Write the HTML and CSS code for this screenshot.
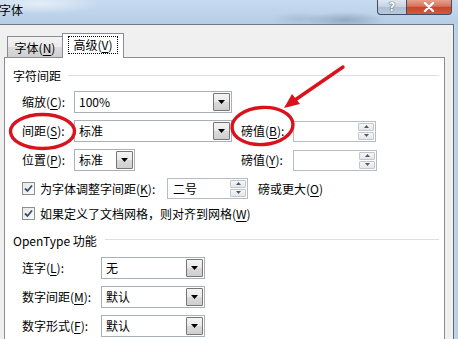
FILE: index.html
```html
<!DOCTYPE html>
<html lang="zh-CN">
<head>
<meta charset="utf-8">
<title>字体</title>
<link rel="stylesheet" href="styles.css">
</head>
<body>
<div class="titlebar">
  <span class="title">字体</span>
  <div class="caption-btns">
    <div class="cbtn help">?</div>
    <div class="cbtn close">
      <svg width="12" height="10" viewBox="0 0 12 10"><path d="M2 1 L10 9 M10 1 L2 9" stroke="#fff" stroke-width="2.4" stroke-linecap="round"/></svg>
    </div>
  </div>
</div>
<div class="window">
  <div class="client">
    <div class="tabs">
      <div class="tab">字体(<u>N</u>)</div>
      <div class="tab active"><span class="focus">高级(<u>V</u>)</span></div>
    </div>
    <div class="panel">
      <div class="group-head"><span>字符间距</span><i class="rule"></i></div>
      <div class="grid1">
        <label class="lbl start">缩放(<u>C</u>):</label>
        <div class="combo w158"><span class="val">100%</span><span class="drop"><svg width="7" height="4" viewBox="0 0 7 4"><polygon points="0,0 7,0 3.5,4" fill="#000"/></svg></span></div>

        <label class="lbl start">间距(<u>S</u>):</label>
        <div class="combo w158"><span class="val">标准</span><span class="drop"><svg width="7" height="4" viewBox="0 0 7 4"><polygon points="0,0 7,0 3.5,4" fill="#000"/></svg></span></div>
        <label class="lbl">磅值(<u>B</u>):</label>
        <div class="spin w83"><span class="val"></span><span class="spinbtns"><span class="sb"><svg width="5" height="3" viewBox="0 0 5 3"><polygon points="0,3 5,3 2.5,0" fill="#4a5b70"/></svg></span><span class="sb"><svg width="5" height="3" viewBox="0 0 5 3"><polygon points="0,0 5,0 2.5,3" fill="#4a5b70"/></svg></span></span></div>

        <label class="lbl start">位置(<u>P</u>):</label>
        <div class="combo w61"><span class="val">标准</span><span class="drop"><svg width="7" height="4" viewBox="0 0 7 4"><polygon points="0,0 7,0 3.5,4" fill="#000"/></svg></span></div>
        <label class="lbl">磅值(<u>Y</u>):</label>
        <div class="spin w84"><span class="val"></span><span class="spinbtns"><span class="sb"><svg width="5" height="3" viewBox="0 0 5 3"><polygon points="0,3 5,3 2.5,0" fill="#4a5b70"/></svg></span><span class="sb"><svg width="5" height="3" viewBox="0 0 5 3"><polygon points="0,0 5,0 2.5,3" fill="#4a5b70"/></svg></span></span></div>
      </div>

      <div class="checkrow first">
        <div class="checkcell">
          <span class="check"><svg width="11" height="11" viewBox="0 0 11 11"><path d="M2 5.5 L4.5 8 L9 2.5" fill="none" stroke="#3b4e6c" stroke-width="1.8"/></svg></span>
          <span class="ctext">为字体调整字间距(<u>K</u>):</span>
        </div>
        <div class="spin w81"><span class="val">二号</span><span class="spinbtns"><span class="sb"><svg width="5" height="3" viewBox="0 0 5 3"><polygon points="0,3 5,3 2.5,0" fill="#4a5b70"/></svg></span><span class="sb"><svg width="5" height="3" viewBox="0 0 5 3"><polygon points="0,0 5,0 2.5,3" fill="#4a5b70"/></svg></span></span></div>
        <span class="after">磅或更大(<u>O</u>)</span>
      </div>
      <div class="checkrow second">
        <div class="checkcell">
          <span class="check"><svg width="11" height="11" viewBox="0 0 11 11"><path d="M2 5.5 L4.5 8 L9 2.5" fill="none" stroke="#3b4e6c" stroke-width="1.8"/></svg></span>
          <span class="ctext">如果定义了文档网格，则对齐到网格(<u>W</u>)</span>
        </div>
      </div>

      <div class="group-head ot"><span>OpenType 功能</span><i class="rule"></i></div>
      <div class="grid2">
        <label class="lbl">连字(<u>L</u>):</label>
        <div class="combo w104"><span class="val">无</span><span class="drop"><svg width="7" height="4" viewBox="0 0 7 4"><polygon points="0,0 7,0 3.5,4" fill="#000"/></svg></span></div>
        <label class="lbl">数字间距(<u>M</u>):</label>
        <div class="combo w104"><span class="val">默认</span><span class="drop"><svg width="7" height="4" viewBox="0 0 7 4"><polygon points="0,0 7,0 3.5,4" fill="#000"/></svg></span></div>
        <label class="lbl">数字形式(<u>F</u>):</label>
        <div class="combo w104"><span class="val">默认</span><span class="drop"><svg width="7" height="4" viewBox="0 0 7 4"><polygon points="0,0 7,0 3.5,4" fill="#000"/></svg></span></div>
      </div>
    </div>
  </div>
  <div class="edge"></div>
</div>

<svg class="marks" width="458" height="339" viewBox="0 0 458 339">
  <ellipse cx="42.5" cy="131.5" rx="32" ry="17" fill="none" stroke="#d9121b" stroke-width="3.4"/>
  <ellipse cx="262.5" cy="126" rx="30.5" ry="18.5" fill="none" stroke="#d9121b" stroke-width="3.4" transform="rotate(-4 262.5 126)"/>
  <path d="M343 67 L295 100" stroke="#d9121b" stroke-width="3.4" stroke-linecap="round"/>
  <polygon points="284,108 292,94 300,104" fill="#d9121b"/>
</svg>
</body>
</html>
```

FILE: styles.css
```css
* { box-sizing: border-box; }
html, body {
  margin: 0;
  padding: 0;
}
body {
  width: 458px;
  height: 339px;
  overflow: hidden;
  position: relative;
  font-family: "Noto Sans CJK SC", "Noto Sans", sans-serif;
  font-size: 12px;
  color: #000;
  background: #f0f0f0;
}
u { text-decoration: underline; text-underline-offset: 2px; }

.titlebar {
  height: 24px;
  display: flex;
  align-items: flex-start;
  background:
    radial-gradient(ellipse 40px 8px at 345px 20px, rgba(80,100,120,0.35), rgba(80,100,120,0) 100%),
    radial-gradient(ellipse 30px 7px at 300px 19px, rgba(120,140,160,0.25), rgba(120,140,160,0) 100%),
    radial-gradient(ellipse 60px 10px at 40px 4px, rgba(255,255,255,0.55), rgba(255,255,255,0) 100%),
    linear-gradient(to bottom, #c8dbef 0%, #bcd3ea 60%, #b4cde6 100%);
}
.title {
  margin-left: -1px;
  line-height: 20px;
  font-size: 12px;
  color: #000;
}
.caption-btns {
  margin-left: auto;
  margin-right: 6px;
  display: flex;
}
.cbtn {
  height: 15px;
  border: 1px solid #3d4f66;
  border-top: none;
  display: flex;
  align-items: center;
  justify-content: center;
}
.help {
  width: 29px;
  border-radius: 0 0 0 4px;
  border-right: none;
  background: linear-gradient(to bottom, #dfe7f0 0%, #c4d2e2 50%, #aebfd3 51%, #b9cadc 100%);
  color: #fff;
  font-family: "DejaVu Sans", sans-serif;
  font-weight: bold;
  font-size: 12px;
  text-shadow: 0 0 1px #2c3e55, 0 0 1px #2c3e55;
}
.close {
  width: 46px;
  border-radius: 0 0 4px 0;
  background: linear-gradient(to bottom, #e6a08e 0%, #d8735c 45%, #c8452b 52%, #d35a3e 100%);
}

.window {
  display: flex;
  height: 315px;
}
.client {
  width: 454px;
  border-top: 1px solid #6f7a86;
  border-right: 1px solid #5f6a76;
  background: #f0f0f0;
  padding-left: 4px;
  padding-right: 8px;
}
.edge {
  flex: 1;
  background: linear-gradient(to right, #c2d7ee, #b3cbe6);
}

.tabs {
  margin-top: 8px;
  height: 25px;
  margin-bottom: -1px;
  display: flex;
  align-items: flex-start;
  position: relative;
  z-index: 1;
}
.tab {
  margin-top: 3px;
  margin-left: 3px;
  width: 55px;
  height: 21px;
  border: 1px solid #898c95;
  border-bottom: none;
  border-right: none;
  background: linear-gradient(to bottom, #f3f3f3 0%, #ebebeb 50%, #dddddd 51%, #cfcfcf 100%);
  display: flex;
  align-items: center;
  justify-content: center;
  padding-top: 1px;
}
.tab.active {
  margin-top: 0;
  margin-left: 0;
  width: 62px;
  height: 25px;
  border-right: 1px solid #898c95;
  background: #fff;
  padding-top: 0;
  padding-bottom: 2px;
}
.focus {
  display: inline-block;
  padding: 0 4px;
  height: 18px;
  line-height: 16px;
  border: 1px dotted #000;
}

.panel {
  height: 290px;
  background: #fff;
  border: 1px solid #898c95;
  border-bottom: none;
  padding: 10px 5px 0 8px;
}
.group-head {
  height: 16px;
  display: flex;
  align-items: center;
  line-height: 16px;
}
.group-head .rule {
  flex: 1;
  height: 1px;
  background: #dcdfe3;
  margin-left: 7px;
  margin-bottom: 2px;
}
.group-head.ot { margin-top: 10px; }
.group-head.ot .rule { margin-left: 8px; margin-bottom: 4px; }

.lbl { line-height: 22px; white-space: nowrap; }

.grid1 {
  margin-top: 7px;
  margin-left: 9px;
  display: grid;
  grid-template-columns: 52px 167px 52px 84px;
  grid-auto-rows: 22px;
  row-gap: 7px;
  align-items: center;
}
.grid1 .start { grid-column: 1; }
.grid2 {
  margin-top: 8px;
  margin-left: 9px;
  display: grid;
  grid-template-columns: 79px 104px;
  grid-auto-rows: 22px;
  row-gap: 7px;
  align-items: center;
}

.combo {
  height: 22px;
  border: 1px solid #a9b0b8;
  background: #fff;
  display: flex;
  align-items: stretch;
  padding: 1px;
}
.combo .val {
  flex: 1;
  padding-left: 3px;
  line-height: 18px;
}
.drop {
  width: 17px;
  border: 1px solid #767676;
  border-radius: 1px;
  background: linear-gradient(to bottom, #f4f4f4 0%, #e9e9e9 50%, #dadada 51%, #cfcfcf 100%);
  display: flex;
  align-items: center;
  justify-content: center;
}
.w158 { width: 158px; }
.w61 { width: 61px; }
.w104 { width: 104px; }

.spin {
  height: 21px;
  border: 1px solid #b5bcc4;
  background: #fff;
  display: flex;
  padding: 1px;
}
.spin .val {
  flex: 1;
  padding-left: 4px;
  line-height: 17px;
}
.spinbtns {
  width: 16px;
  display: flex;
  flex-direction: column;
  gap: 1px;
}
.sb {
  flex: 1;
  border: 1px solid #c3c7cc;
  border-radius: 1px;
  background: linear-gradient(to bottom, #f7f7f7, #e4e6e8);
  display: flex;
  align-items: center;
  justify-content: center;
}
.w83 { width: 83px; }
.w84 { width: 84px; }
.w81 { width: 81px; }

.checkrow {
  margin-left: 9px;
  display: flex;
  align-items: center;
}
.checkrow.first { margin-top: 6px; height: 22px; }
.checkrow.second { margin-top: 4px; height: 20px; }
.checkcell {
  width: 145px;
  display: flex;
  align-items: center;
  white-space: nowrap;
}
.check {
  width: 13px;
  height: 13px;
  border: 1px solid #8e8f8f;
  background: linear-gradient(135deg, #e8e8e8, #fafafa);
  display: flex;
  align-items: center;
  justify-content: center;
  flex: none;
}
.ctext { margin-left: 5px; }
.after { margin-left: 10px; }

.marks {
  position: absolute;
  left: 0;
  top: 0;
  pointer-events: none;
}
```
